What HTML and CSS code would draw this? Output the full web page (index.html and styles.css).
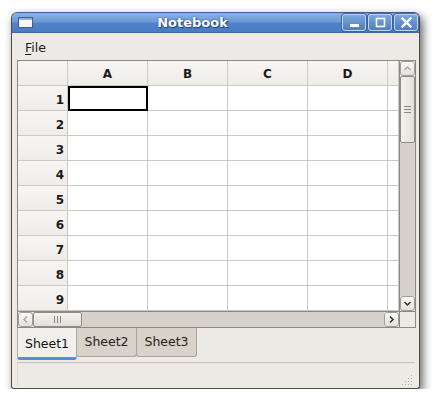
FILE: index.html
```html
<!DOCTYPE html>
<html>
<head>
<meta charset="utf-8">
<title>Notebook</title>
<link rel="stylesheet" href="styles.css">
</head>
<body>
<div class="window">
  <div class="titlebar">
    <svg class="app-icon" width="15" height="11" viewBox="0 0 15 11"><rect x="0.5" y="0.5" width="14" height="10" fill="#f6f6f4" stroke="#4e5d73"/><rect x="1" y="1" width="13" height="2" fill="#8fb1de"/></svg>
    <div class="title">Notebook</div>
    <div class="tbtns">
      <div class="tbtn"><svg width="21" height="15" viewBox="0 0 21 15"><rect x="6" y="9" width="9" height="3" fill="#fff"/></svg></div>
      <div class="tbtn"><svg width="21" height="15" viewBox="0 0 21 15"><rect x="6.5" y="3.5" width="8" height="8" fill="none" stroke="#fff" stroke-width="1.6"/></svg></div>
      <div class="tbtn"><svg width="21" height="15" viewBox="0 0 21 15"><path d="M6.5 3.5 L14.5 11.5 M14.5 3.5 L6.5 11.5" stroke="#fff" stroke-width="2.4" stroke-linecap="square"/></svg></div>
    </div>
  </div>
  <div class="menubar"><span class="menu"><u>F</u>ile</span></div>
  <div class="content">
    <div class="frame">
      <div class="viewport">
        <div class="sheet">
          <div class="hd"></div><div class="hd">A</div><div class="hd">B</div><div class="hd">C</div><div class="hd">D</div><div class="hd"></div>
          <div class="rh">1</div><div class="c sel"></div><div class="c"></div><div class="c"></div><div class="c"></div><div class="c"></div>
          <div class="rh">2</div><div class="c"></div><div class="c"></div><div class="c"></div><div class="c"></div><div class="c"></div>
          <div class="rh">3</div><div class="c"></div><div class="c"></div><div class="c"></div><div class="c"></div><div class="c"></div>
          <div class="rh">4</div><div class="c"></div><div class="c"></div><div class="c"></div><div class="c"></div><div class="c"></div>
          <div class="rh">5</div><div class="c"></div><div class="c"></div><div class="c"></div><div class="c"></div><div class="c"></div>
          <div class="rh">6</div><div class="c"></div><div class="c"></div><div class="c"></div><div class="c"></div><div class="c"></div>
          <div class="rh">7</div><div class="c"></div><div class="c"></div><div class="c"></div><div class="c"></div><div class="c"></div>
          <div class="rh">8</div><div class="c"></div><div class="c"></div><div class="c"></div><div class="c"></div><div class="c"></div>
          <div class="rh">9</div><div class="c"></div><div class="c"></div><div class="c"></div><div class="c"></div><div class="c"></div>
        </div>
      </div>
      <div class="vscroll">
        <div class="sbtn"><svg width="13" height="13" viewBox="0 0 13 13"><polyline points="3.5,8 6.5,5 9.5,8" fill="none" stroke="#a9a59e" stroke-width="1.3"/></svg></div>
        <div class="vthumb"><svg width="9" height="7" viewBox="0 0 9 7"><path d="M1 0.5H8M1 3.5H8M1 6.5H8" stroke="#8a857d" stroke-width="1"/></svg></div>
        <div class="trough"></div>
        <div class="sbtn"><svg width="13" height="13" viewBox="0 0 13 13"><polyline points="3.5,5 6.5,8 9.5,5" fill="none" stroke="#2e2e2e" stroke-width="1.5"/></svg></div>
      </div>
      <div class="hscroll">
        <div class="sbtn"><svg width="13" height="13" viewBox="0 0 13 13"><polyline points="8,3.5 5,6.5 8,9.5" fill="none" stroke="#a9a59e" stroke-width="1.3"/></svg></div>
        <div class="hthumb"><svg width="7" height="9" viewBox="0 0 7 9"><path d="M0.5 1V8M3.5 1V8M6.5 1V8" stroke="#8a857d" stroke-width="1"/></svg></div>
        <div class="trough"></div>
        <div class="sbtn"><svg width="13" height="13" viewBox="0 0 13 13"><polyline points="5,3.5 8,6.5 5,9.5" fill="none" stroke="#2e2e2e" stroke-width="1.5"/></svg></div>
      </div>
      <div class="corner"></div>
    </div>
    <div class="tabs">
      <div class="tab active">Sheet1</div>
      <div class="tab">Sheet2</div>
      <div class="tab">Sheet3</div>
    </div>
    <div class="status">
      <svg class="grip" width="11" height="11" viewBox="0 0 11 11" fill="#b3aea6">
        <rect x="9" y="1" width="1" height="1"/>
        <rect x="6" y="4" width="1" height="1"/><rect x="9" y="4" width="1" height="1"/>
        <rect x="3" y="7" width="1" height="1"/><rect x="6" y="7" width="1" height="1"/><rect x="9" y="7" width="1" height="1"/>
        <rect x="0" y="10" width="1" height="1"/><rect x="3" y="10" width="1" height="1"/><rect x="6" y="10" width="1" height="1"/><rect x="9" y="10" width="1" height="1"/>
      </svg>
    </div>
  </div>
</div>
</body>
</html>
```

FILE: styles.css
```css
* { box-sizing: border-box; }

html, body {
  margin: 0;
  padding: 0;
  background: #ffffff;
}

body {
  font-family: "DejaVu Sans", sans-serif;
  font-size: 12.5px;
  color: #1a1a1a;
  padding: 12px 0 0 11px;
}

.window {
  width: 409px;
  height: 377px;
  background: #edeae6;
  border: 1px solid #4f4c48;
  border-top-color: #3a64a3;
  border-radius: 6px 6px 3px 3px;
  box-shadow: 3px 4px 10px rgba(0, 0, 0, 0.6);
  display: flex;
  flex-direction: column;
  overflow: hidden;
}

.titlebar {
  height: 20px;
  flex: none;
  display: flex;
  align-items: center;
  padding: 0 1px 0 6px;
  background: linear-gradient(#8cb1e2 0%, #6b9bd9 45%, #4f82c8 55%, #4a7cc3 100%);
  border-bottom: 1px solid #3f6aa8;
}

.app-icon { flex: none; margin-top: -1px; }

.title {
  flex: 1;
  text-align: center;
  padding-left: 10px;
  color: #ffffff;
  font-weight: bold;
  font-size: 13px;
  text-shadow: 1px 1px 1px #24467a, 0 0 2px #2c4f85;
}

.tbtns { display: flex; gap: 2px; }

.tbtn {
  width: 24px;
  height: 17px;
  border: 1px solid #c4d6ef;
  border-radius: 3px;
  background: linear-gradient(#7ea6dc, #4c7ec5);
  box-shadow: 0 0 0 1px #3c66a4;
  display: flex;
  align-items: center;
  justify-content: center;
}

.tbtn svg { display: block; }

.menubar {
  height: 26px;
  flex: none;
  display: flex;
  align-items: center;
  padding-left: 13px;
  padding-top: 2px;
}

.menu u { text-decoration: underline; text-underline-offset: 2px; }

.content {
  flex: 1;
  display: flex;
  flex-direction: column;
  padding: 1px 3px 3px 5px;
}

.frame {
  flex: none;
  width: 399px;
  height: 268px;
  border: 1px solid #8d8882;
  display: grid;
  grid-template-columns: 381px 16px;
  grid-template-rows: 250px 16px;
  background: #edeae6;
}

.viewport {
  overflow: hidden;
  background: #ffffff;
}

.sheet {
  display: grid;
  grid-template-columns: 50px 80px 80px 80px 80px 11px;
  grid-auto-rows: 25px;
}

.sheet > div {
  border-right: 1px solid #c8c8c8;
  border-bottom: 1px solid #c8c8c8;
}

.hd {
  background: linear-gradient(#f7f6f3, #efece8);
  border-color: #cdc9c2 !important;
  font-weight: bold;
  font-size: 12px;
  display: flex;
  align-items: center;
  justify-content: center;
  padding-top: 2px;
}

.rh {
  background: linear-gradient(#f7f6f3, #efece8);
  border-color: #cdc9c2 !important;
  font-weight: bold;
  font-size: 12px;
  display: flex;
  align-items: center;
  justify-content: flex-end;
  padding-right: 3px;
  padding-top: 3px;
}

.c { background: #ffffff; }

.c.sel {
  outline: 2px solid #000000;
  outline-offset: -2px;
  border-right-color: #000 !important;
  border-bottom-color: #000 !important;
}

.vscroll {
  display: flex;
  flex-direction: column;
  border-left: 1px solid #8d8882;
}

.hscroll {
  display: flex;
  border-top: 1px solid #8d8882;
}

.trough {
  flex: 1;
  background: #d6d1c9;
}

.sbtn {
  flex: none;
  width: 15px;
  height: 15px;
  background: linear-gradient(#fbfaf9, #e4e0da);
  border: 1px solid #a29d95;
  border-radius: 3px;
  display: flex;
  align-items: center;
  justify-content: center;
}

.sbtn svg { display: block; }

.vthumb {
  flex: none;
  height: 67px;
  background: linear-gradient(90deg, #f4f2ef, #e3dfd9);
  border: 1px solid #8f8a83;
  border-radius: 2px;
  display: flex;
  align-items: center;
  justify-content: center;
}

.hthumb {
  flex: none;
  width: 49px;
  background: linear-gradient(#f4f2ef, #e3dfd9);
  border: 1px solid #8f8a83;
  border-radius: 2px;
  display: flex;
  align-items: center;
  justify-content: center;
}

.corner {
  background: #edeae6;
  border-top: 1px solid #8d8882;
  border-left: 1px solid #8d8882;
}

.tabs {
  flex: none;
  height: 33px;
  display: flex;
  align-items: flex-start;
}

.tab {
  width: 60px;
  height: 29px;
  display: flex;
  align-items: center;
  justify-content: center;
  background: #d8d2c9;
  border: 1px solid #a9a49c;
  border-top: none;
  border-radius: 0 0 3px 3px;
  font-size: 12.5px;
  color: #222;
  padding-bottom: 1px;
}

.tab + .tab { margin-left: -1px; width: 61px; }

.tab.active {
  height: 32px;
  background: #f2f0ed;
  border-color: #b2ada5;
  border-bottom: 3px solid #5a8dd0;
  border-radius: 0 0 3px 3px;
  padding-top: 2px;
  color: #111;
}

.status {
  flex: none;
  height: 24px;
  margin-top: 1px;
  width: 398px;
  border-top: 1px solid #c6c1b9;
  border-left: 1px solid #dedad4;
  display: flex;
  align-items: flex-end;
  justify-content: flex-end;
  padding: 0 2px 1px 0;
}

.grip { display: block; }
```
